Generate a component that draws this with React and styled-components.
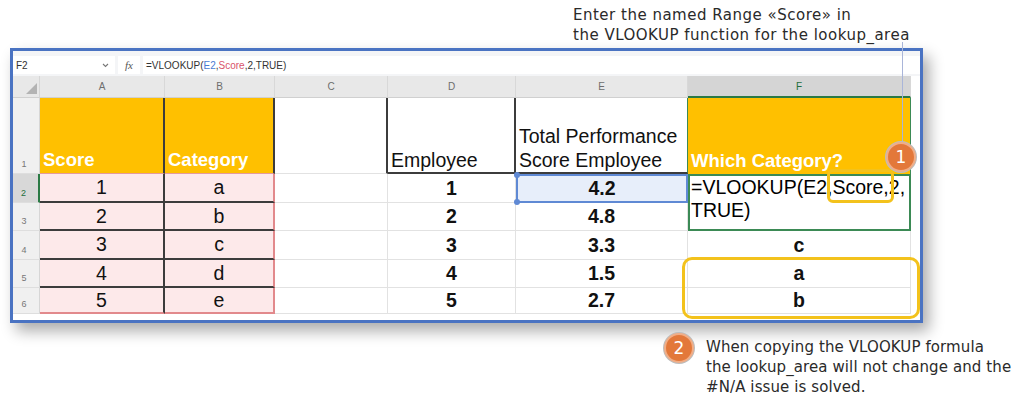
import React from 'react';
import styled, { createGlobalStyle, css } from 'styled-components';

const Global = createGlobalStyle`
  html, body { margin: 0; padding: 0; background: #fff; }
  body {
    width: 1024px; height: 410px; overflow: hidden;
    font-family: "Liberation Sans", Arial, sans-serif;
  }
`;

const Page = styled.div`
  position: relative;
  width: 1024px;
  height: 410px;
  display: flex;
  flex-direction: column;
`;

const Note = styled.div`
  font-family: "DejaVu Sans", "Liberation Sans", sans-serif;
  font-size: 15px;
  letter-spacing: ${p => p.$ls || '0.5px'};
  line-height: 20px;
  color: #2a2a2a;
  white-space: nowrap;
`;

const TopNote = styled(Note)`
  box-sizing: border-box;
  height: 48px;
  padding: 5px 0 0 573px;
`;

const Pointer = styled.div`
  position: absolute;
  left: 902px;
  top: 42px;
  width: 1px;
  height: 101px;
  background: #a9b5d9;
`;

const Badge = styled.div`
  box-sizing: border-box;
  width: 30px;
  height: 30px;
  border-radius: 50%;
  background: #e3783a;
  border: 2px solid #f1ad86;
  box-shadow: 0 0 0 1px #bdbdbd;
  color: #fff;
  font-family: "DejaVu Sans", sans-serif;
  font-size: 17px;
  display: flex;
  align-items: center;
  justify-content: center;
  flex: none;
`;

const FloatingBadge = styled(Badge)`
  position: absolute;
  left: 886px;
  top: 142px;
`;

const Window = styled.div`
  box-sizing: border-box;
  margin-left: 10px;
  width: 913px;
  border: 3px solid #4a73c2;
  background: #fff;
  box-shadow: 6px 8px 14px rgba(0, 0, 0, 0.33);
`;

const FormulaBar = styled.div`
  box-sizing: border-box;
  height: 25px;
  padding-top: 5px;
  display: flex;
  align-items: flex-start;
  gap: 3px;
  background: #f4f5f7;
  font-size: 10px;
  color: #333;
`;

const NameBox = styled.div`
  box-sizing: border-box;
  width: 102px;
  height: 18px;
  background: #fff;
  display: flex;
  align-items: center;
  justify-content: space-between;
  padding: 0 6px 0 3px;
`;

const FxBox = styled.div`
  width: 22px;
  height: 18px;
  background: #fff;
  display: flex;
  align-items: center;
  justify-content: center;
  font-family: "Liberation Serif", serif;
  font-style: italic;
  font-size: 11px;
  color: #555;
`;

const FormulaInput = styled.div`
  box-sizing: border-box;
  flex: 1;
  height: 18px;
  background: #fff;
  display: flex;
  align-items: center;
  padding-left: 3px;
`;

const Ref = styled.span`
  color: ${p => p.$c};
`;

const Sheet = styled.div`
  position: relative;
  display: grid;
  grid-template-columns: 27px 125px 110px 113px 128px 172px 223px 9px;
  grid-template-rows: 22px 76px 29px 28px 29px 28px 26px;
`;

const Corner = styled.div`
  box-sizing: border-box;
  background: #e8e8e8;
  border-right: 1px solid #d6d6d6;
  border-bottom: 1px solid #d0d0d0;
  display: flex;
  align-items: flex-end;
  justify-content: flex-end;
  padding: 0 2px 3px 0;
`;

const Triangle = styled.div`
  width: 0;
  height: 0;
  border-left: 11px solid transparent;
  border-bottom: 11px solid #b3b3b3;
`;

const ColHead = styled.div`
  box-sizing: border-box;
  background: ${p => (p.$active ? '#d5d5d5' : '#e8e8e8')};
  color: ${p => (p.$active ? '#1f6e3c' : '#6d6d6d')};
  border-right: 1px solid #d8d8d8;
  border-bottom: ${p => (p.$active ? '2px solid #2b7a45' : '1px solid #d0d0d0')};
  font-size: 10px;
  display: flex;
  align-items: center;
  justify-content: center;
`;

const RowHead = styled.div`
  box-sizing: border-box;
  background: ${p => (p.$active ? '#d8d8d8' : '#f0f0f0')};
  color: ${p => (p.$active ? '#1f6e3c' : '#777')};
  border-right: ${p => (p.$active ? '2px solid #2b7a45' : '1px solid #d6d6d6')};
  border-bottom: 1px solid #dedede;
  font-size: 9px;
  display: flex;
  align-items: flex-end;
  justify-content: center;
  padding: 0 4px 4px 0;
`;

const Filler = styled.div`
  background: #fff;
`;

const Cell = styled.div`
  box-sizing: border-box;
  display: flex;
  white-space: nowrap;
  font-size: 19.5px;
  color: #111;
  background: ${p => p.$bg || '#fff'};
  border-right: ${p => p.$br || '1px solid #e2e2e2'};
  border-bottom: ${p => p.$bb || '1px solid #e2e2e2'};
`;

const TitleCell = styled(Cell)`
  background: #ffc000;
  color: #fff;
  font-weight: bold;
  font-size: 18.5px;
  align-items: flex-end;
  padding: 0 0 2px 3px;
`;

const LabelCell = styled(Cell)`
  flex-direction: column;
  justify-content: flex-end;
  line-height: 1.2;
  padding: 0 0 0 3px;
`;

const ListCell = styled(Cell)`
  background: #fde9ea;
  align-items: center;
  justify-content: center;
`;

const ValueCell = styled(Cell)`
  font-weight: bold;
  align-items: center;
  justify-content: center;
  ${p => p.$selected && css`
    position: relative;
    background: #e7eefa;
    border: 2px solid #5f89d4;
    &::before, &::after {
      content: '';
      position: absolute;
      left: -4px;
      width: 6px;
      height: 6px;
      border-radius: 50%;
      background: #5f89d4;
    }
    &::before { top: -4px; }
    &::after { bottom: -4px; }
  `}
`;

const FormulaCell = styled(Cell)`
  grid-row: span 2;
  border: 2px solid #3b8a55;
  flex-direction: column;
  line-height: 1.2;
  color: #000;
  padding: 0 0 0 1px;
`;

const Highlight = styled.div`
  position: absolute;
  box-sizing: border-box;
  border: 3px solid #f3c21c;
  border-radius: ${p => p.$r}px;
  pointer-events: none;
`;

const BottomStrip = styled.div`
  height: 6px;
  background: #fff;
`;

const BottomRow = styled.div`
  display: flex;
  align-items: flex-start;
  gap: 12px;
  margin-top: 10px;
  padding-left: 664px;
`;

const BottomText = styled(Note)`
  padding-top: 4px;
`;

const BLACK = '2px solid #3c3c3c';
const PINK = '2px solid #e2898c';
const GREEN = '1px solid #3b8a55';

const cols = ['A', 'B', 'C', 'D', 'E', 'F'];
const listRows = [
  ['1', 'a'],
  ['2', 'b'],
  ['3', 'c'],
  ['4', 'd'],
  ['5', 'e'],
];
const employees = [
  ['1', '4.2', null],
  ['2', '4.8', null],
  ['3', '3.3', 'c'],
  ['4', '1.5', 'a'],
  ['5', '2.7', 'b'],
];

function Chevron() {
  return (
    <svg width="7" height="5" viewBox="0 0 7 5">
      <path d="M1 1l2.5 2.5L6 1" fill="none" stroke="#777" strokeWidth="1.1" />
    </svg>
  );
}

export default function App() {
  return (
    <Page>
      <Global />
      <TopNote>
        Enter the named Range «Score» in
        <br />
        the VLOOKUP function for the lookup_area
      </TopNote>

      <Window>
        <FormulaBar>
          <NameBox>
            <span>F2</span>
            <Chevron />
          </NameBox>
          <FxBox>fx</FxBox>
          <FormulaInput>
            =VLOOKUP(<Ref $c="#4a7bd2">E2</Ref>,<Ref $c="#d9546b">Score</Ref>,2,TRUE)
          </FormulaInput>
        </FormulaBar>

        <Sheet>
          <Corner>
            <Triangle />
          </Corner>
          {cols.map(c => (
            <ColHead key={c} $active={c === 'F'}>
              {c}
            </ColHead>
          ))}
          <Filler />

          <RowHead>1</RowHead>
          <TitleCell $br={BLACK} $bb="1px solid #e59a9a">Score</TitleCell>
          <TitleCell $br={BLACK} $bb="1px solid #e59a9a">Category</TitleCell>
          <Cell $br={BLACK} />
          <LabelCell $br={BLACK} $bb={BLACK}>
            <span>Employee</span>
          </LabelCell>
          <LabelCell $br={GREEN} $bb={BLACK}>
            <span>Total Performance</span>
            <span>Score Employee</span>
          </LabelCell>
          <TitleCell $br={GREEN} $bb="none">Which Category?</TitleCell>
          <Filler />

          {listRows.map(([score, cat], i) => {
            const last = i === listRows.length - 1;
            const [emp, total, result] = employees[i];
            return (
              <React.Fragment key={score}>
                <RowHead $active={i === 0}>{i + 2}</RowHead>
                <ListCell $br={BLACK} $bb={last ? PINK : BLACK}>
                  {score}
                </ListCell>
                <ListCell $br={PINK} $bb={last ? PINK : BLACK}>
                  {cat}
                </ListCell>
                <Cell />
                <ValueCell>{emp}</ValueCell>
                <ValueCell $selected={i === 0}>{total}</ValueCell>
                {i === 0 && (
                  <FormulaCell>
                    <span>=VLOOKUP(E2,Score,2,</span>
                    <span>TRUE)</span>
                  </FormulaCell>
                )}
                {result && <ValueCell>{result}</ValueCell>}
                <Filler />
              </React.Fragment>
            );
          })}

          <Highlight $r={6} style={{ left: 814, top: 93, width: 67, height: 34 }} />
          <Highlight $r={10} style={{ left: 669, top: 181, width: 238, height: 62 }} />
        </Sheet>
        <BottomStrip />
      </Window>

      <BottomRow>
        <Badge>2</Badge>
        <BottomText $ls="0.1px">
          When copying the VLOOKUP formula
          <br />
          the lookup_area will not change and the
          <br />
          #N/A issue is solved.
        </BottomText>
      </BottomRow>

      <Pointer />
      <FloatingBadge>1</FloatingBadge>
    </Page>
  );
}
